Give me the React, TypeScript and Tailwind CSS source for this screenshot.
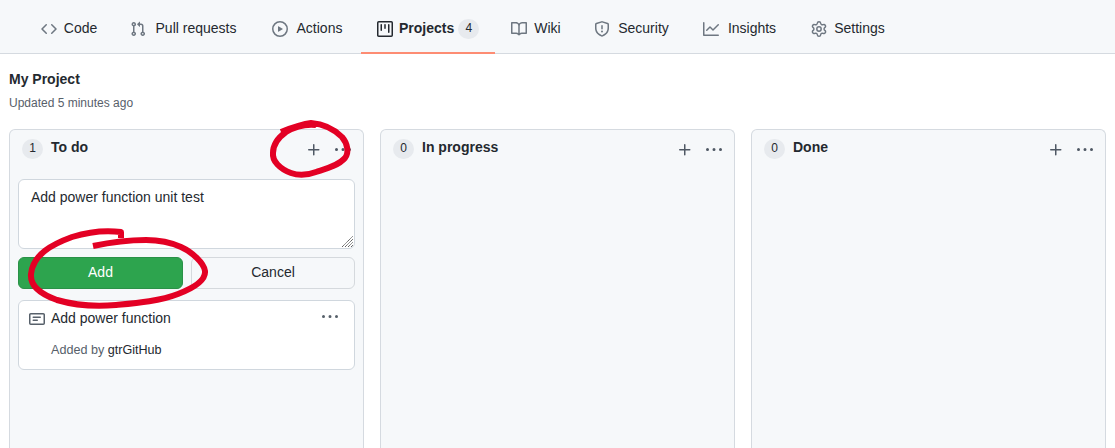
import type { ReactNode } from "react";
import { Settings } from "lucide-react";

const paths = {
  code: "M4.72 3.22a.75.75 0 011.06 1.06L2.06 8l3.72 3.72a.75.75 0 11-1.06 1.06L.47 8.53a.75.75 0 010-1.06l4.25-4.25zm6.56 0a.75.75 0 10-1.06 1.06L13.94 8l-3.72 3.72a.75.75 0 101.06 1.06l4.25-4.25a.75.75 0 000-1.06l-4.25-4.25z",
  pull: "M7.177 3.073L9.573.677A.25.25 0 0110 .854v4.792a.25.25 0 01-.427.177L7.177 3.427a.25.25 0 010-.354zM3.75 2.5a.75.75 0 100 1.5.75.75 0 000-1.5zm-2.25.75a2.25 2.25 0 113 2.122v5.256a2.251 2.251 0 11-1.5 0V5.372A2.25 2.25 0 011.5 3.25zM11 2.5h-1V4h1a1 1 0 011 1v5.628a2.251 2.251 0 101.5 0V5A2.5 2.5 0 0011 2.5zm1 10.25a.75.75 0 111.5 0 .75.75 0 01-1.5 0zM3.75 12a.75.75 0 100 1.5.75.75 0 000-1.5z",
  play: "M1.5 8a6.5 6.5 0 1113 0 6.5 6.5 0 01-13 0zM8 0a8 8 0 100 16A8 8 0 008 0zM6.379 5.227A.25.25 0 006 5.442v5.117a.25.25 0 00.379.214l4.264-2.559a.25.25 0 000-.428L6.379 5.227z",
  project: "M1.75 0A1.75 1.75 0 000 1.75v12.5C0 15.216.784 16 1.75 16h12.5A1.75 1.75 0 0016 14.25V1.75A1.75 1.75 0 0014.25 0H1.75zM1.5 1.75a.25.25 0 01.25-.25h12.5a.25.25 0 01.25.25v12.5a.25.25 0 01-.25.25H1.75a.25.25 0 01-.25-.25V1.75zM11.75 3a.75.75 0 00-.75.75v7.5a.75.75 0 001.5 0v-7.5a.75.75 0 00-.75-.75zm-8.25.75a.75.75 0 011.5 0v5.5a.75.75 0 01-1.5 0v-5.5zM8 3a.75.75 0 00-.75.75v3.5a.75.75 0 001.5 0v-3.5A.75.75 0 008 3z",
  book: "M0 1.75A.75.75 0 01.75 1h4.253c1.227 0 2.317.59 3 1.501A3.744 3.744 0 0111.006 1h4.245a.75.75 0 01.75.75v10.5a.75.75 0 01-.75.75h-4.507a2.25 2.25 0 00-1.591.659l-.622.621a.75.75 0 01-1.06 0l-.622-.621A2.25 2.25 0 005.258 13H.75a.75.75 0 01-.75-.75V1.75zm8.755 3a2.25 2.25 0 012.25-2.25H14.5v9h-3.757c-.71 0-1.4.201-1.992.572l.004-7.322zm-1.504 7.324l.004-5.073-.002-2.253A2.25 2.25 0 005.003 2.5H1.5v9h3.757a3.75 3.75 0 011.994.574z",
  shield: "M7.467.133a1.75 1.75 0 011.066 0l5.25 1.68A1.75 1.75 0 0115 3.48V7c0 1.566-.32 3.182-1.303 4.682-.983 1.498-2.585 2.813-5.032 3.855a1.7 1.7 0 01-1.33 0c-2.447-1.042-4.049-2.357-5.032-3.855C1.32 10.182 1 8.566 1 7V3.48a1.75 1.75 0 011.217-1.667l5.25-1.68zm.61 1.429a.25.25 0 00-.153 0l-5.25 1.68a.25.25 0 00-.174.238V7c0 1.358.275 2.666 1.057 3.86.784 1.194 2.121 2.34 4.366 3.297a.2.2 0 00.154 0c2.245-.956 3.582-2.104 4.366-3.298C13.225 9.666 13.5 8.36 13.5 7V3.48a.25.25 0 00-.174-.237l-5.25-1.68zM9 10.5a1 1 0 11-2 0 1 1 0 012 0zm-.25-5.75a.75.75 0 10-1.5 0v3a.75.75 0 001.5 0v-3z",
  graph: "M1.5 1.75a.75.75 0 00-1.5 0v12.5c0 .414.336.75.75.75h14.5a.75.75 0 000-1.5H1.5V1.75zm14.28 2.53a.75.75 0 00-1.06-1.06L10 7.94 7.53 5.47a.75.75 0 00-1.06 0L3.22 8.72a.75.75 0 001.06 1.06L7 7.06l2.47 2.47a.75.75 0 001.06 0l5.25-5.25z",
  note: "M0 3.75C0 2.784.784 2 1.75 2h12.5c.966 0 1.75.784 1.75 1.75v8.5A1.75 1.75 0 0114.25 14H1.75A1.75 1.75 0 010 12.25v-8.5zm1.75-.25a.25.25 0 00-.25.25v8.5c0 .138.112.25.25.25h12.5a.25.25 0 00.25-.25v-8.5a.25.25 0 00-.25-.25H1.75zM3.5 6.25a.75.75 0 01.75-.75h7a.75.75 0 010 1.5h-7a.75.75 0 01-.75-.75zm.75 2.25a.75.75 0 000 1.5h4a.75.75 0 000-1.5h-4z",
  plus: "M7.75 2a.75.75 0 01.75.75V7h4.25a.75.75 0 110 1.5H8.5v4.25a.75.75 0 11-1.5 0V8.5H2.75a.75.75 0 010-1.5H7V2.75A.75.75 0 017.75 2z",
  kebab: "M8 9a1.5 1.5 0 100-3 1.5 1.5 0 000 3zM1.5 9a1.5 1.5 0 100-3 1.5 1.5 0 000 3zm13 0a1.5 1.5 0 100-3 1.5 1.5 0 000 3z",
};

function Icon({ name, className = "" }: { name: keyof typeof paths; className?: string }) {
  return (
    <svg viewBox="0 0 16 16" className={`size-4 shrink-0 ${className}`} fill="currentColor" fillRule="evenodd" aria-hidden="true">
      <path d={paths[name]} />
    </svg>
  );
}

function Counter({ value }: { value: number }) {
  return (
    <span className="flex h-5 w-[21px] shrink-0 justify-center rounded-full bg-[#e7eaee] text-xs leading-[18px]">{value}</span>
  );
}

function Tab({ icon, label, width, count }: { icon: ReactNode; label: string; width: string; count?: number }) {
  const active = count !== undefined;
  return (
    <a
      className={`flex h-[54px] shrink-0 border-b-2 pt-[19px] px-4 ${width} ${
        active ? "border-[#fd8c73] font-bold" : "border-transparent"
      }`}
    >
      <span className={`mt-0.5 mr-1.5 h-4 ${active ? "" : "text-[#6e7781]"}`}>{icon}</span>
      <span className="flex-1 text-center leading-[18px] whitespace-nowrap">{label}</span>
      {active && (
        <span className="ml-1 font-normal">
          <Counter value={count} />
        </span>
      )}
    </a>
  );
}

function Column({ count, title, children }: { count: number; title: string; children?: ReactNode }) {
  return (
    <section className="w-[355px] shrink-0 rounded-t-md border border-b-0 border-[#d5dae0] bg-[#f6f8fa] px-2">
      <header className="flex h-[49px] pt-[9px] pl-1">
        <Counter value={count} />
        <h2 className="ml-2 flex-1 font-bold leading-4">{title}</h2>
        <div className="mt-[3px] mr-1 flex gap-[13px] text-[#4f5864]">
          <Icon name="plus" />
          <Icon name="kebab" />
        </div>
      </header>
      {children}
    </section>
  );
}

function Annotations() {
  return (
    <svg className="pointer-events-none absolute inset-0 h-[448px] w-[1115px]" fill="none" stroke="#e30024" strokeWidth="6" strokeLinejoin="round">
      <path d="M281 132C291 128 302 124 311 123C324 124 334 129 342 137C348 144 349 153 345 158C338 166 325 169 316 172C308 175 299 176 291 173C280 169 272 161 273 153C273 144 279 137 286 132C296 126 306 124 316 125" />
      <path d="M93 246C112 242 128 240 146 240C158 240 170 242 181 247C192 252 204 263 205 271C206 281 191 289 178 294C160 301 137 303 116 305C94 307 74 305 57 300C40 294 30 285 31 274C33 254 53 244 72 237C88 232 106 230 121 232L121 238" />
    </svg>
  );
}

export default function App() {
  return (
    <div className="relative flex h-[448px] w-[1115px] flex-col overflow-hidden bg-white font-['Liberation_Sans',Arial,sans-serif] text-sm text-[#24292f]">
      <nav className="flex h-[54px] shrink-0 bg-[#f6f8fa] pl-[25px] shadow-[inset_0_-1px_0_#d5dae0]">
        <Tab icon={<Icon name="code" />} label="Code" width="w-[89px]" />
        <Tab icon={<Icon name="pull" />} label="Pull requests" width="w-[142px]" />
        <Tab icon={<Icon name="play" />} label="Actions" width="w-[105px]" />
        <Tab icon={<Icon name="project" />} label="Projects" width="w-[134px]" count={4} />
        <Tab icon={<Icon name="book" />} label="Wiki" width="w-[83px]" />
        <Tab icon={<Icon name="shield" />} label="Security" width="w-[109px]" />
        <Tab icon={<Icon name="graph" />} label="Insights" width="w-[108px]" />
        <Tab
          icon={<Settings viewBox="1 1 22 22" strokeWidth={2} className="size-4" />}
          label="Settings"
          width="w-[107px]"
        />
      </nav>

      <div className="h-[75px] shrink-0 pt-4 pl-[9px]">
        <h1 className="font-bold leading-[18px]">My Project</h1>
        <p className="mt-1.5 text-xs leading-[18px] text-[#57606a]">Updated 5 minutes ago</p>
      </div>

      <main className="flex flex-1 gap-4 pl-[9px]">
        <Column count={1} title="To do">
          <div className="relative h-[70px] rounded-md border border-[#d0d7de] bg-white px-3 pt-2 leading-[18px]">
            Add power function unit test
            <svg className="absolute right-px bottom-px size-[11px]" viewBox="0 0 11 11" stroke="#555" strokeWidth="1" strokeDasharray="1.3 .4">
              <path d="M0 11L11 0M3 11L11 3M6 11L11 6M9 11L11 9" />
            </svg>
          </div>
          <div className="mt-2 flex gap-2 leading-[28px]">
            <button className="h-8 w-[165px] rounded-md border border-[#2a9147] bg-[#2da44e] pb-0.5 text-white">Add</button>
            <button className="h-8 flex-1 rounded-md border border-[#d5d9dd] bg-[#f6f8fa] pb-0.5">Cancel</button>
          </div>
          <article className="mt-[11px] flex h-[70px] rounded-md border border-[#d0d7de] bg-white pt-[9px] pl-2.5">
            <Icon name="note" className="mt-px text-[#57606a]" />
            <div className="ml-1.5 flex-1">
              <h3 className="leading-4">Add power function</h3>
              <p className="mt-4 text-[12.6px] leading-4 text-[#57606a]">
                Added by <span className="text-[#24292f]">gtrGitHub</span>
              </p>
            </div>
            <Icon name="kebab" className="-mt-px mr-4 text-[#57606a]" />
          </article>
        </Column>
        <Column count={0} title="In progress" />
        <Column count={0} title="Done" />
      </main>
      <Annotations />
    </div>
  );
}
